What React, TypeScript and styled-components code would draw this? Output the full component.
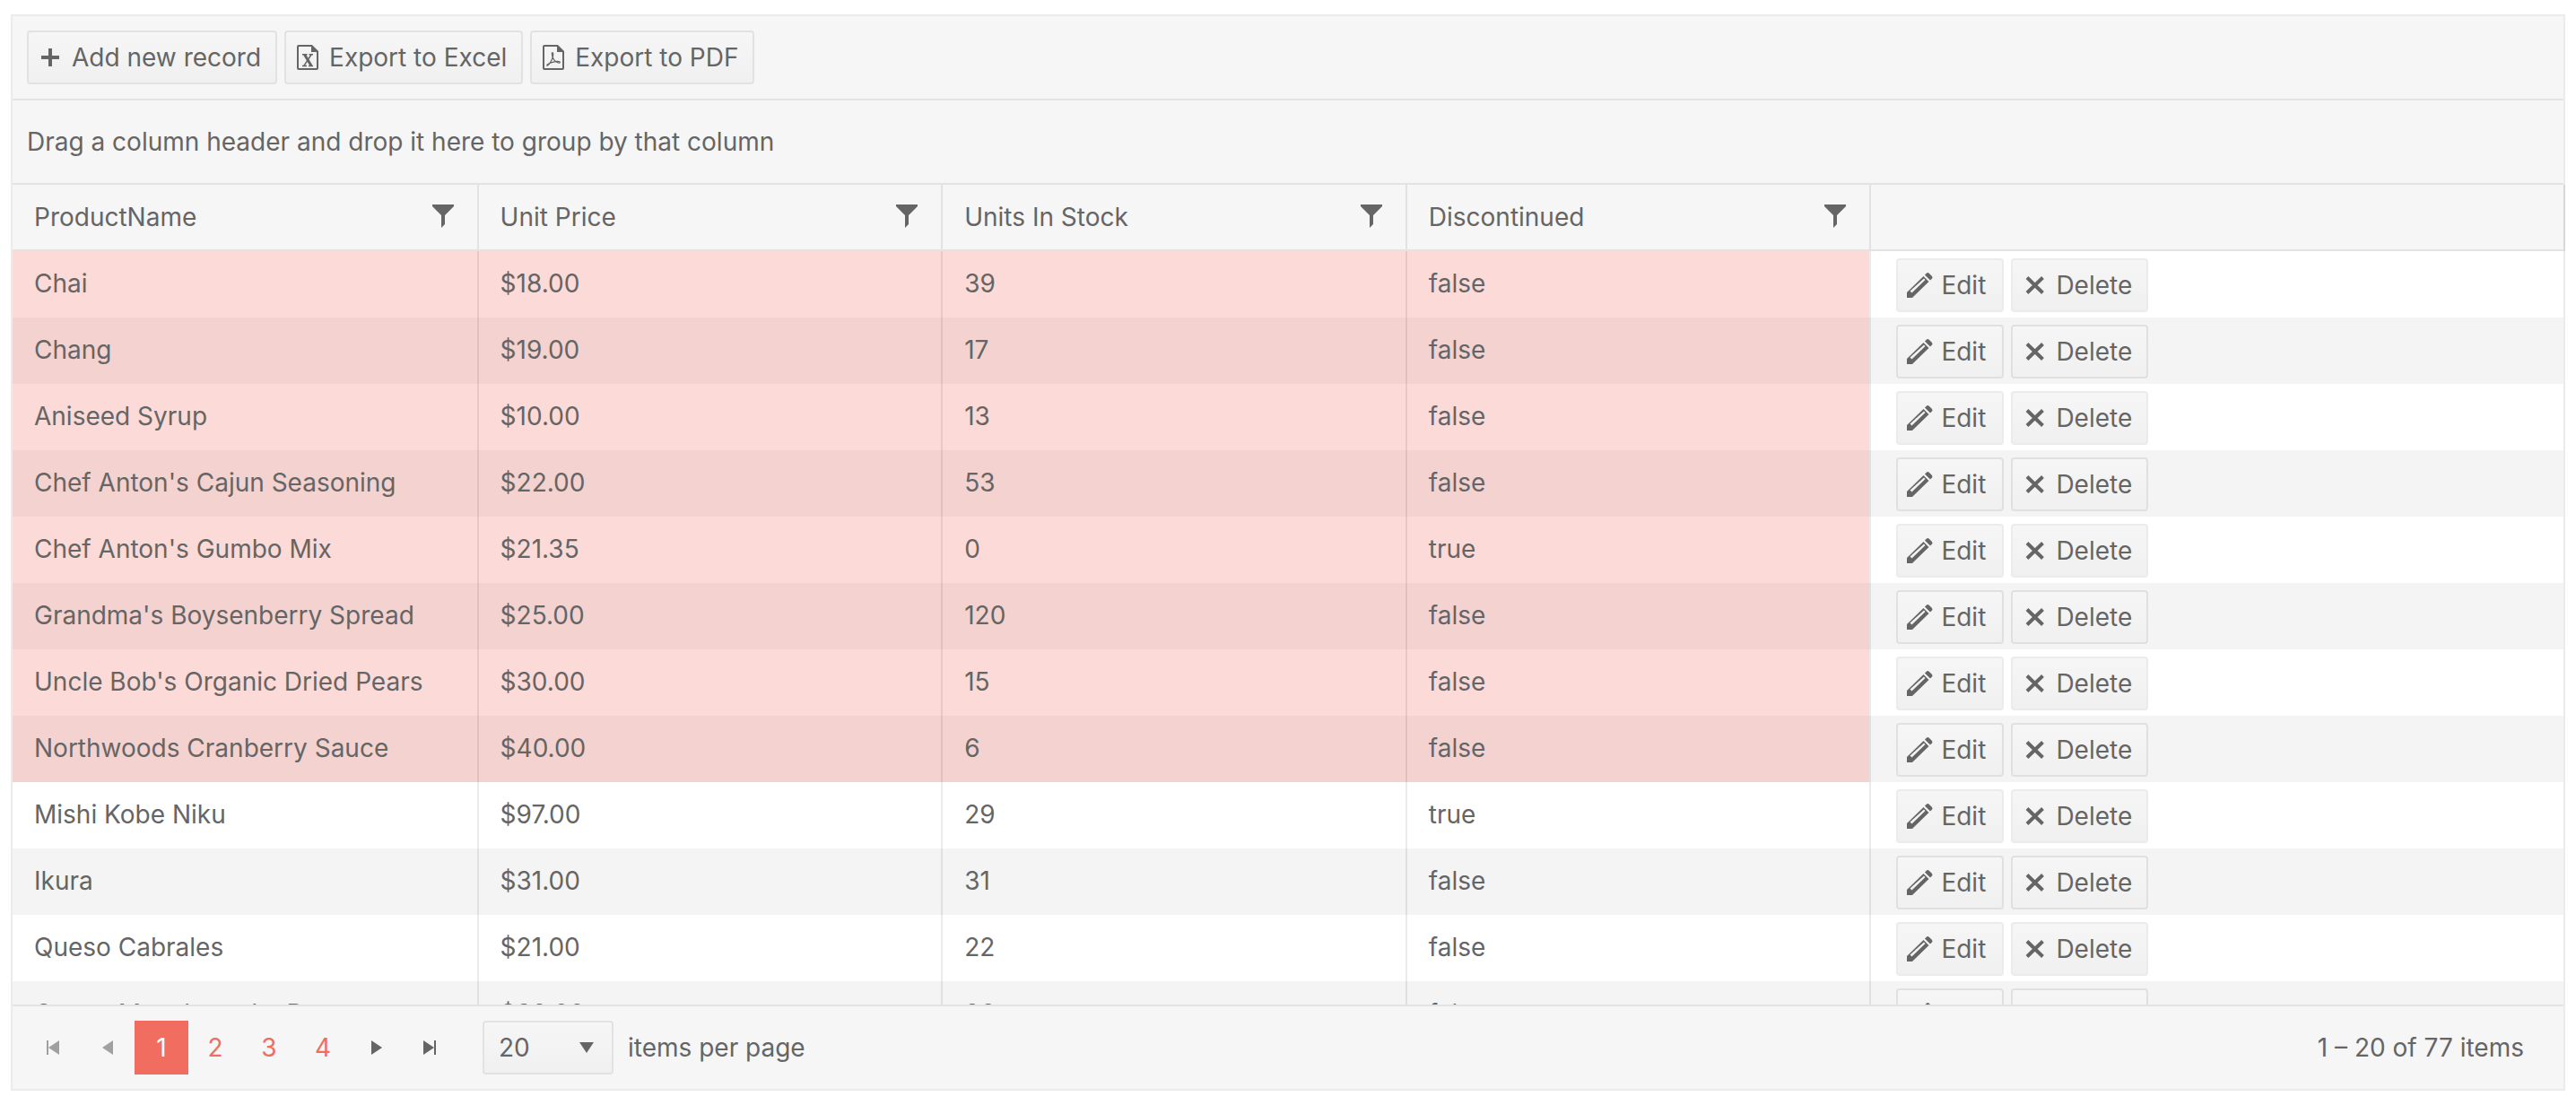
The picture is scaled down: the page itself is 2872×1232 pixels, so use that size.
import React, { useState } from 'react';
import styled, { createGlobalStyle } from 'styled-components';

const line = 'rgba(0, 0, 0, 0.08)';
const ink = '#656565';
const panel = '#f6f6f6';
const accent = '#f06d60';

const GlobalStyle = createGlobalStyle`
  *, *::before, *::after { box-sizing: border-box; }
  body {
    margin: 0;
    background: #ffffff;
    color: ${ink};
    font: 400 28px/40px Inter, "Liberation Sans", sans-serif;
  }
`;

const Grid = styled.section`
  display: flex;
  flex-direction: column;
  margin: 16px 12px;
  border: 2px solid ${line};
`;

const Toolbar = styled.div`
  display: flex;
  gap: 8px;
  padding: 16px;
  background: ${panel};
  border-bottom: 2px solid #e3e3e3;
`;

const GroupBar = styled.div`
  padding: 26px 16px;
  background: ${panel};
  border-bottom: 2px solid #e3e3e3;
`;

const HeaderArea = styled.div`
  background: ${panel};
  border-bottom: 2px solid #e3e3e3;
  box-shadow: 2px 0 0 ${line};
`;

const BodyArea = styled.div`
  height: 840px;
  overflow: auto;
  scrollbar-width: none;
`;

const Table = styled.table`
  width: 100%;
  table-layout: fixed;
  border-collapse: separate;
  border-spacing: 0;
`;

const DataCol = styled.col`
  width: 18.2%;
`;

const HeaderCell = styled.th`
  height: 72px;
  padding: 0 24px;
  font-weight: 400;
  text-align: left;
  border-left: 2px solid ${line};
  &:first-child { border-left: 0; }
`;

const HeaderContent = styled.div`
  display: flex;
  align-items: center;
  justify-content: space-between;
`;

const FilterButton = styled.button`
  display: flex;
  padding: 0 2px;
  border: 0;
  background: none;
  color: inherit;
  cursor: pointer;
`;

const Row = styled.tr`
  height: 74px;
  &:nth-child(even) { background: #f4f4f4; }
`;

const Cell = styled.td<{ $low: boolean }>`
  padding: 0 24px 2px;
  border-left: 2px solid ${line};
  background: ${(p) => (p.$low ? '#fcdad7' : 'transparent')};
  ${Row}:nth-child(even) & {
    background: ${(p) => (p.$low ? '#f4d2cf' : 'transparent')};
  }
  &:first-child { border-left: 0; }
`;

const CommandCell = styled.td`
  padding: 8px 28px 6px;
  border-left: 2px solid ${line};
`;

const Commands = styled.div`
  display: flex;
  gap: 8px;
`;

const Button = styled.button`
  display: inline-flex;
  align-items: center;
  gap: 8px;
  height: 60px;
  min-width: 120px;
  padding: 0 16px 0 8px;
  border: 2px solid ${line};
  border-radius: 4px;
  background: linear-gradient(#f6f6f6, #f0f0f0) padding-box;
  color: inherit;
  font: inherit;
  white-space: nowrap;
  cursor: pointer;
`;

const Pager = styled.footer`
  display: flex;
  align-items: center;
  padding: 16px;
  background: ${panel};
  border-top: 2px solid #e3e3e3;
`;

const PageButton = styled.button<{ $current?: boolean }>`
  display: flex;
  align-items: center;
  justify-content: center;
  width: 60px;
  height: 60px;
  padding: 0;
  border: 0;
  background: ${(p) => (p.$current ? accent : 'transparent')};
  color: ${(p) => (p.$current ? '#ffffff' : accent)};
  font: inherit;
  cursor: pointer;
`;

const ArrowButton = styled(PageButton)`
  color: ${ink};
  &:disabled { color: #a0a0a0; cursor: default; }
`;

const SizeLabel = styled.label`
  display: flex;
  align-items: center;
  gap: 16px;
  margin-left: 28px;
`;

const SelectBox = styled.span`
  position: relative;
  display: flex;
`;

const Select = styled.select`
  appearance: none;
  width: 146px;
  height: 60px;
  padding: 0 16px;
  border: 2px solid ${line};
  border-radius: 4px;
  background: linear-gradient(#f6f6f6, #f0f0f0) padding-box;
  color: inherit;
  font: inherit;
`;

const SelectArrow = styled.svg`
  position: absolute;
  top: 14px;
  right: 14px;
  pointer-events: none;
`;

const PagerInfo = styled.span`
  margin-left: auto;
  padding-right: 28px;
`;

const Icon = ({ children }: { children: React.ReactNode }) => (
  <svg width="32" height="32" viewBox="0 0 32 32" fill="currentColor" aria-hidden="true">
    {children}
  </svg>
);

const PlusIcon = () => (
  <Icon><path d="M14 6h4v8h8v4h-8v8h-4v-8H6v-4h8z" /></Icon>
);

const FileShape = () => (
  <>
    <path d="M20.5 3H6a1 1 0 0 0-1 1v24a1 1 0 0 0 1 1h20a1 1 0 0 0 1-1V9.500z" fill="none" stroke="currentColor" strokeWidth="2" />
    <path d="M20 2l8 8h-8z" />
  </>
);

const ExcelIcon = () => (
  <Icon>
    <FileShape />
    <path d="M12.500 12.800l7.500 12.400" stroke="currentColor" strokeWidth="3" />
    <path d="M20 13l-8 12.200M10 12.800h5.500M17.500 12.800h4.500M10 25.400h5M17 25.400h5" fill="none" stroke="currentColor" strokeWidth="1.500" />
  </Icon>
);

const PdfIcon = () => (
  <Icon>
    <FileShape />
    <path d="M15 10.500c-1 0-.8 3 .5 6 1 2.500 3 4.500 6 5.500 2 .5 2.500-1 .5-1.500-3-.5-9 1-12 3-1.500 1-1.500 2-.5 1.500 2-1 5-6 6-10 .5-3 .3-4.500-.5-4.500z" fill="none" stroke="currentColor" strokeWidth="1.200" />
  </Icon>
);

const PencilIcon = () => (
  <Icon>
    <path d="M2 24L20.500 6l6 6L8 30H2z" />
    <path d="M22 4.500l2-2q1.500-1 3 .5l3 3q1 1.500 0 2.500L28 10.500z" />
    <path d="M5.500 22.500L21 8.500l1.500 1.500L7.500 24.500z" fill="#f3f3f3" />
  </Icon>
);

const CrossIcon = () => (
  <Icon><path d="M8 7.500L25.500 24.500M25.500 7.500L8 24.500" stroke="currentColor" strokeWidth="4" /></Icon>
);

const FilterIcon = () => (
  <svg width="24" height="28" viewBox="0 0 24 28" fill="currentColor" aria-hidden="true">
    <path d="M0 0h24v2L14 12v10l-4 4V12L0 2z" />
  </svg>
);

type Product = [name: string, price: string, stock: number, discontinued: boolean];

const products: Product[] = [
  ['Chai', '$18.00', 39, false],
  ['Chang', '$19.00', 17, false],
  ['Aniseed Syrup', '$10.00', 13, false],
  ["Chef Anton's Cajun Seasoning", '$22.00', 53, false],
  ["Chef Anton's Gumbo Mix", '$21.35', 0, true],
  ["Grandma's Boysenberry Spread", '$25.00', 120, false],
  ["Uncle Bob's Organic Dried Pears", '$30.00', 15, false],
  ['Northwoods Cranberry Sauce', '$40.00', 6, false],
  ['Mishi Kobe Niku', '$97.00', 29, true],
  ['Ikura', '$31.00', 31, false],
  ['Queso Cabrales', '$21.00', 22, false],
  ['Queso Manchego La Pastora', '$38.00', 86, false],
];

const highlighted = 8;
const columns = ['ProductName', 'Unit Price', 'Units In Stock', 'Discontinued'];
const pages = [1, 2, 3, 4];

const Columns = () => (
  <colgroup>
    {columns.map((c) => <DataCol key={c} />)}
    <col />
  </colgroup>
);

export default function App() {
  const [page, setPage] = useState(1);
  const [size, setSize] = useState('20');

  return (
    <>
      <GlobalStyle />
      <Grid>
        <Toolbar>
          <Button><PlusIcon />Add new record</Button>
          <Button><ExcelIcon />Export to Excel</Button>
          <Button><PdfIcon />Export to PDF</Button>
        </Toolbar>
        <GroupBar>Drag a column header and drop it here to group by that column</GroupBar>
        <HeaderArea>
          <Table>
            <Columns />
            <thead>
              <tr>
                {columns.map((c) => (
                  <HeaderCell key={c} scope="col">
                    <HeaderContent>
                      {c}
                      <FilterButton aria-label={`Filter ${c}`}><FilterIcon /></FilterButton>
                    </HeaderContent>
                  </HeaderCell>
                ))}
                <HeaderCell scope="col" aria-label="Commands" />
              </tr>
            </thead>
          </Table>
        </HeaderArea>
        <BodyArea>
          <Table>
            <Columns />
            <tbody>
              {products.map(([name, price, stock, discontinued], i) => {
                const low = i < highlighted;
                return (
                  <Row key={name}>
                    <Cell $low={low}>{name}</Cell>
                    <Cell $low={low}>{price}</Cell>
                    <Cell $low={low}>{stock}</Cell>
                    <Cell $low={low}>{String(discontinued)}</Cell>
                    <CommandCell>
                      <Commands>
                        <Button><PencilIcon />Edit</Button>
                        <Button><CrossIcon />Delete</Button>
                      </Commands>
                    </CommandCell>
                  </Row>
                );
              })}
            </tbody>
          </Table>
        </BodyArea>
        <Pager>
          <ArrowButton aria-label="First page" disabled={page === 1} onClick={() => setPage(1)}>
            <Icon><path d="M8 8h2v8l12-8v16l-12-8v8H8z" /></Icon>
          </ArrowButton>
          <ArrowButton aria-label="Previous page" disabled={page === 1} onClick={() => setPage(page - 1)}>
            <Icon><path d="M22 8v16l-12-8z" /></Icon>
          </ArrowButton>
          {pages.map((p) => (
            <PageButton key={p} $current={p === page} onClick={() => setPage(p)}>{p}</PageButton>
          ))}
          <ArrowButton aria-label="Next page" disabled={page === 4} onClick={() => setPage(page + 1)}>
            <Icon><path d="M10 8v16l12-8z" /></Icon>
          </ArrowButton>
          <ArrowButton aria-label="Last page" disabled={page === 4} onClick={() => setPage(4)}>
            <Icon><path d="M22 8h-2v8L8 8v16l12-8v8h2z" /></Icon>
          </ArrowButton>
          <SizeLabel>
            <SelectBox>
              <Select value={size} onChange={(e) => setSize(e.target.value)}>
                <option>5</option>
                <option>10</option>
                <option>20</option>
              </Select>
              <SelectArrow width="32" height="32" viewBox="0 0 32 32" fill="currentColor" aria-hidden="true">
                <path d="M8 10h16l-8 12z" />
              </SelectArrow>
            </SelectBox>
            items per page
          </SizeLabel>
          <PagerInfo>1 – 20 of 77 items</PagerInfo>
        </Pager>
      </Grid>
    </>
  );
}
